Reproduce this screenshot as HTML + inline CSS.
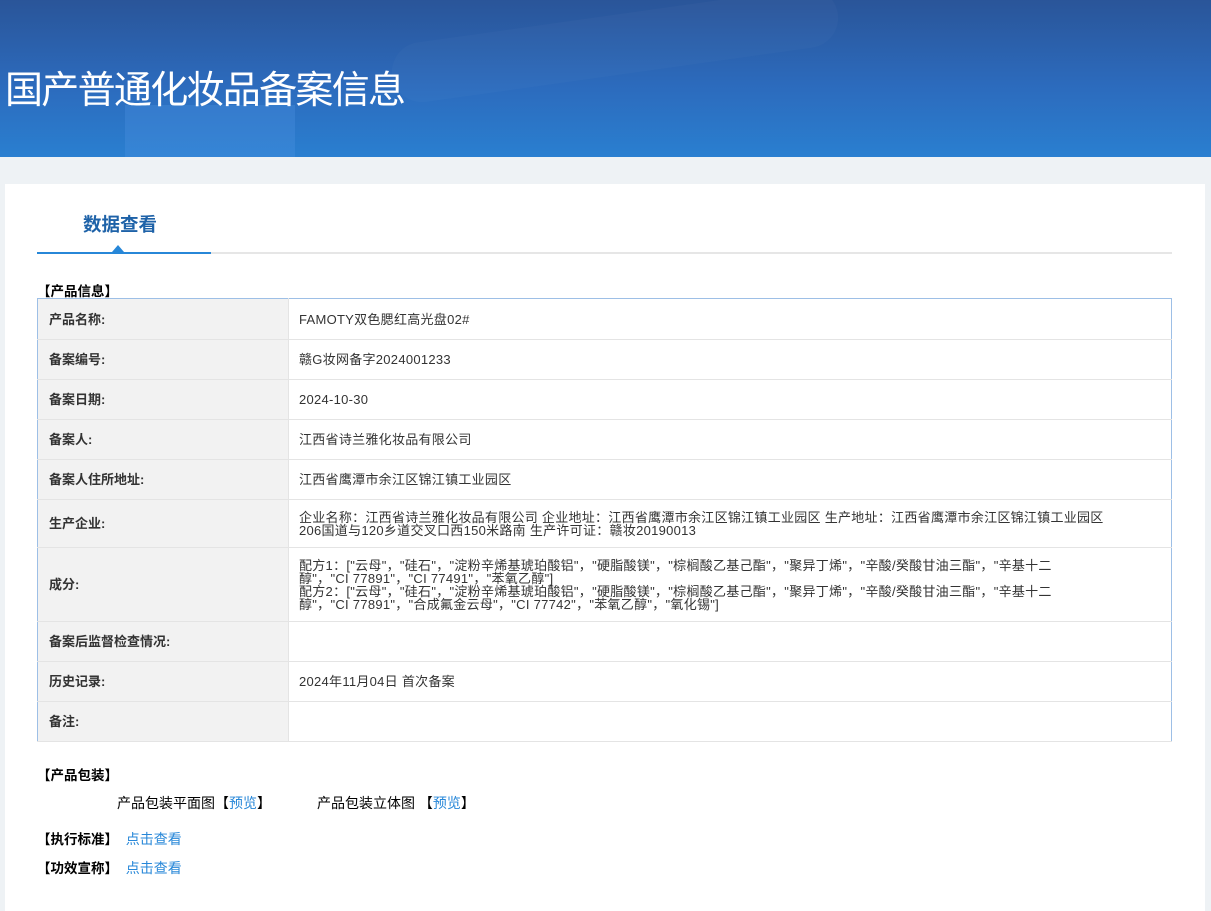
<!DOCTYPE html>
<html><head><meta charset="utf-8"><style>
*{margin:0;padding:0;box-sizing:border-box}
body{width:1211px;height:911px;overflow:hidden;background:#eef2f5;font-family:"Liberation Sans","Noto Sans CJK SC",sans-serif;color:#333;font-size:13px;position:relative}
.hd{position:absolute;left:0;top:0;width:1211px;height:157px;background:linear-gradient(180deg,#2a5599 0%,#2c6bbd 55%,#2a7fd0 100%);overflow:hidden}
.hd .b1{position:absolute;left:125px;top:105px;width:170px;height:60px;background:rgba(80,150,230,.3)}
.hd .b2{position:absolute;left:390px;top:15px;width:450px;height:60px;border-radius:40px;background:rgba(255,255,255,.025);transform:rotate(-8deg)}
.hd h1{position:absolute;left:5px;top:59px;font-size:38px;font-weight:normal;color:#fff;letter-spacing:-1.7px;font-family:"Noto Sans CJK SC",sans-serif}
.card{position:absolute;left:5px;top:184px;width:1200px;height:727px;background:#fff}
.tab{position:absolute;left:83px;top:211px;font-size:18.5px;font-weight:bold;color:#1e62a8}
.gl{position:absolute;left:37px;top:252px;width:1135px;height:2px;background:#e6e6e6}
.bl{position:absolute;left:37px;top:252px;width:174px;height:2px;background:#2787d8}
.tri{position:absolute;left:112px;top:245px;width:0;height:0;border-left:6px solid transparent;border-right:6px solid transparent;border-bottom:7px solid #2787d8}
.sec{position:absolute;font-weight:bold;color:#000;font-size:13.5px}
table{position:absolute;left:37px;top:298px;width:1135px;border-collapse:collapse;border:1px solid #9dbfe6}
td{border-bottom:1px solid #e4e4e4;padding:0 11px;vertical-align:middle;line-height:13px}
td.l{width:251px;background:#f2f2f2;font-weight:bold;border-right:1px solid #e4e4e4;color:#333}
td.v{padding-left:10px;letter-spacing:.28px}
a{color:#2787d8;text-decoration:none}
.t{position:absolute;font-size:14px;color:#000}
</style></head><body>
<div class="hd"><div class="b2"></div><div class="b1"></div><h1>国产普通化妆品备案信息</h1></div>
<div class="card"></div>
<div class="tab">数据查看</div>
<div class="gl"></div><div class="bl"></div><div class="tri"></div>
<div class="sec" style="left:37px;top:280px">【产品信息】</div>
<table>
<tr style="height:41px"><td class="l">产品名称:</td><td class="v">FAMOTY双色腮红高光盘02#</td></tr>
<tr style="height:40px"><td class="l">备案编号:</td><td class="v">赣G妆网备字2024001233</td></tr>
<tr style="height:40px"><td class="l">备案日期:</td><td class="v">2024-10-30</td></tr>
<tr style="height:40px"><td class="l">备案人:</td><td class="v">江西省诗兰雅化妆品有限公司</td></tr>
<tr style="height:40px"><td class="l">备案人住所地址:</td><td class="v">江西省鹰潭市余江区锦江镇工业园区</td></tr>
<tr style="height:48px"><td class="l">生产企业:</td><td class="v">企业名称：江西省诗兰雅化妆品有限公司 企业地址：江西省鹰潭市余江区锦江镇工业园区 生产地址：江西省鹰潭市余江区锦江镇工业园区<br>206国道与120乡道交叉口西150米路南 生产许可证：赣妆20190013</td></tr>
<tr style="height:74px"><td class="l">成分:</td><td class="v">配方1：["云母"，"硅石"，"淀粉辛烯基琥珀酸铝"，"硬脂酸镁"，"棕榈酸乙基己酯"，"聚异丁烯"，"辛酸/癸酸甘油三酯"，"辛基十二<br>醇"，"CI 77891"，"CI 77491"，"苯氧乙醇"]<br>配方2：["云母"，"硅石"，"淀粉辛烯基琥珀酸铝"，"硬脂酸镁"，"棕榈酸乙基己酯"，"聚异丁烯"，"辛酸/癸酸甘油三酯"，"辛基十二<br>醇"，"CI 77891"，"合成氟金云母"，"CI 77742"，"苯氧乙醇"，"氧化锡"]</td></tr>
<tr style="height:40px"><td class="l">备案后监督检查情况:</td><td class="v"></td></tr>
<tr style="height:40px"><td class="l">历史记录:</td><td class="v">2024年11月04日 首次备案</td></tr>
<tr style="height:40px"><td class="l">备注:</td><td class="v"></td></tr>
</table>
<div class="sec" style="left:37px;top:764px">【产品包装】</div>
<div class="t" style="left:117px;top:793px">产品包装平面图【<a>预览</a>】</div>
<div class="t" style="left:317px;top:793px">产品包装立体图 【<a>预览</a>】</div>
<div class="sec" style="left:37px;top:828px">【执行标准】 <a style="font-weight:normal;font-size:14px;margin-left:4px">点击查看</a></div>
<div class="sec" style="left:37px;top:857px">【功效宣称】 <a style="font-weight:normal;font-size:14px;margin-left:4px">点击查看</a></div>
</body></html>
